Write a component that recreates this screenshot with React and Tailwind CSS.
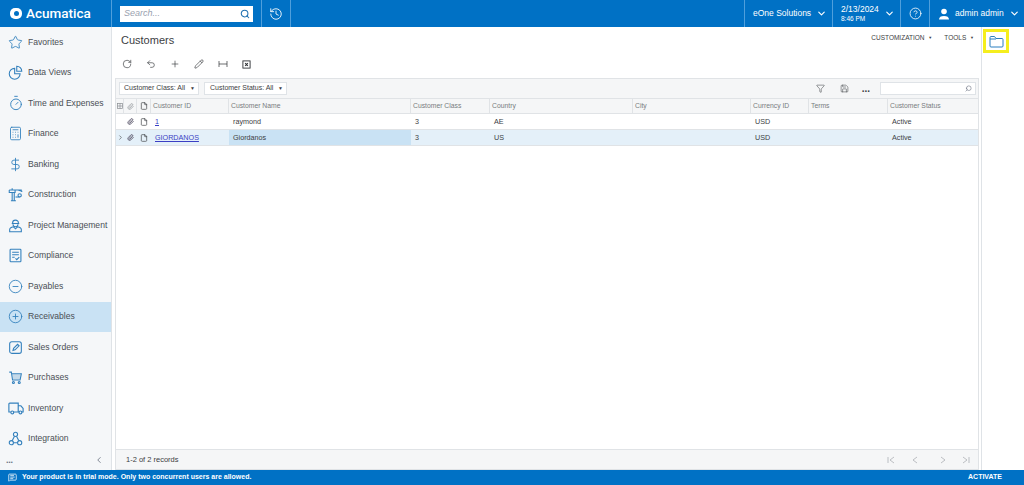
import React from "react";
import {
  Star, Timer, Calculator, DollarSign, CirclePlus, CircleMinus, ChevronDown,
  ChevronLeft, ChevronRight, CircleHelp, RotateCw, Undo2, Plus, Pencil, Filter, Save, Search, Paperclip, File, MessageSquareText, History,
} from "lucide-react";

const font = "font-['Liberation_Sans',Arial,sans-serif]";

const Svg = ({ children, w = 15, h = 15 }) => (
  <svg width={w} height={h} viewBox="0 0 18 18" fill="none" stroke="currentColor" strokeWidth="1.3" className="shrink-0">
    {children}
  </svg>
);

const DataViews = () => (
  <Svg>
    <path d="M8 4a6.5 6.5 0 1 0 6.5 6.5H8z" />
    <path d="M10.5 1.5a6 6 0 0 1 6 6h-6z" />
  </Svg>
);
const Crane = () => (
  <Svg>
    <path d="M1.5 3.5h15M5 1.5v2M1.5 3.5v3h7v-3M5 6.5V16M7.5 6.5V16M3.5 16.5h6M12 3.5l4.5 1.5v1" />
    <circle cx="14" cy="10" r="2" />
    <path d="M9 12h5" />
  </Svg>
);
const Worker = () => (
  <Svg>
    <path d="M5.5 6a3.5 3.5 0 0 1 7 0M4.5 6.5h9M6 7.5a3 3 0 0 0 6 0" />
    <path d="M2 16.5v-2.5c0-2 2-3 4.5-3.5L9 13l2.500-2.500c2.500.5 4.500 1.500 4.500 3.500v2.500z" />
  </Svg>
);
const Compliance = () => (
  <Svg>
    <rect x="2.500" y="1.500" width="13" height="15" rx="1" />
    <path d="M5 5h8M5 8h8M5 11h3M9 12.500l1.500 1.500 3-3" />
  </Svg>
);
const SalesOrders = () => (
  <Svg>
    <rect x="2" y="2" width="14" height="14" rx="2.500" />
    <path d="M6 12.500l.7-2.500 4.800-4.800 1.800 1.800-4.800 4.800z" />
  </Svg>
);
const Cart = () => (
  <Svg>
    <path d="M1.500 2.500H4l1.500 9.500h9l1.500-7.500H4.500" />
    <path d="M5 5h10.500l-1.200 6.500H6z" fill="currentColor" fillOpacity=".25" stroke="none" />
    <circle cx="6.500" cy="15" r="1.200" />
    <circle cx="13.500" cy="15" r="1.200" />
  </Svg>
);
const TruckIcon = () => (
  <Svg w={16} h={16}>
    <path d="M3 13.500H1v-9a1 1 0 0 1 1-1h9.500v10H6.500M11.500 6.500h3l2.500 3v4h-1.500M11.500 13.500h1" />
    <circle cx="4.800" cy="14" r="1.600" />
    <circle cx="14" cy="14" r="1.600" />
  </Svg>
);
const Integration = () => (
  <Svg>
    <circle cx="9" cy="4" r="2.500" />
    <circle cx="4" cy="14" r="2.500" />
    <circle cx="14" cy="14" r="2.500" />
    <path d="M7.800 6.200L5 11.800M10.200 6.200L13 11.800M6.500 14h5" />
  </Svg>
);

const wrap = (Icon, size = 15) => () => <Icon size={size} strokeWidth={1.4} className="shrink-0" />;

const menu = [
  ["Favorites", wrap(Star)],
  ["Data Views", DataViews],
  ["Time and Expenses", wrap(Timer, 16)],
  ["Finance", wrap(Calculator)],
  ["Banking", wrap(DollarSign)],
  ["Construction", Crane],
  ["Project Management", Worker],
  ["Compliance", Compliance],
  ["Payables", wrap(CircleMinus)],
  ["Receivables", wrap(CirclePlus)],
  ["Sales Orders", SalesOrders],
  ["Purchases", Cart],
  ["Inventory", TruckIcon],
  ["Integration", Integration],
];

const cols = "grid grid-cols-[8px_13px_14px_78px_182px_79px_143px_118px_58px_79px_1fr]";

const headers = ["Customer ID", "Customer Name", "Customer Class", "Country", "City", "Currency ID", "Terms", "Customer Status"];

const rows = [
  { id: "1", name: "raymond", cls: "3", country: "AE", cur: "USD", status: "Active" },
  { id: "GIORDANOS", name: "Giordanos", cls: "3", country: "US", cur: "USD", status: "Active", active: true },
];

function TopBar() {
  return (
    <header className="h-[27px] bg-[#0071c5] text-white flex items-stretch shrink-0">
      <div className="w-[112px] flex items-center pl-[10px] gap-[4px] border-r border-[#4f9fdc]">
        <span className="w-[12px] h-[11px] rounded-[5px] bg-white flex items-center justify-center">
          <span className="w-[5px] h-[5px] rounded-full bg-[#0071c5]" />
        </span>
        <span className="font-['Roboto',sans-serif] font-medium text-[13.5px] leading-none">Acumatica</span>
      </div>
      <div className="w-[150px] flex items-center pl-[8px] border-r border-[#4f9fdc]">
        <div className="w-[133px] h-[16px] bg-white flex items-center justify-between pl-[4px] pr-[3px]">
          <span className="text-[9px] italic text-gray-400">Search...</span>
          <Search size={10} className="text-[#1c6fb0]" strokeWidth={2.5} />
        </div>
      </div>
      <div className="w-[29px] flex items-center justify-center border-r border-[#4f9fdc]">
        <History size={14} strokeWidth={1.5} />
      </div>
      <div className="flex-1" />
      <div className="w-[88px] flex items-center pl-[8px] gap-[5px] border-l border-[#4f9fdc] text-[8.5px] whitespace-nowrap">
        eOne Solutions <ChevronDown size={11} strokeWidth={2.5} />
      </div>
      <div className="w-[68px] flex items-center pl-[8px] gap-[7px] border-l border-[#4f9fdc]">
        <div className="leading-none w-[36px]">
          <div className="text-[8.5px]">2/13/2024</div>
          <div className="text-[6.5px] mt-[3px]">8:46 PM</div>
        </div>
        <ChevronDown size={11} strokeWidth={2.5} />
      </div>
      <div className="w-[29px] flex items-center justify-center border-l border-[#4f9fdc]">
        <CircleHelp size={13} strokeWidth={1.5} />
      </div>
      <div className="w-[95px] flex items-center pl-[8px] border-l border-[#4f9fdc] text-[8.5px] whitespace-nowrap">
        <svg width="12" height="12" viewBox="0 0 12 12" fill="white" className="mr-[5px] shrink-0">
          <circle cx="6" cy="3.500" r="2.800" />
          <path d="M1 11.500c0-2.500 2-3.500 5-3.500s5 1 5 3.500z" />
        </svg>
        admin admin
        <ChevronDown size={11} strokeWidth={2.5} className="ml-[5px] shrink-0" />
      </div>
    </header>
  );
}

function Sidebar() {
  return (
    <aside className="w-[112px] shrink-0 bg-[#f5f7f9] border-r border-[#dfe3e7] flex flex-col">
      {menu.map(([label, Icon]) => (
        <div
          key={label}
          className={`h-[30.5px] shrink-0 flex items-center pl-[8px] text-[8.6px] whitespace-nowrap text-[#4a4f55] ${label === "Receivables" ? "bg-[#c9e2f4]" : ""}`}
        >
          <span className="w-[20px] text-[#3481bd] shrink-0 flex">
            <Icon />
          </span>
          {label}
        </div>
      ))}
      <div className="flex-1 flex items-center justify-between pl-[6px] pr-[7px] pb-[4px] text-gray-500">
        <span className="text-[9px] leading-none font-bold tracking-tight">...</span>
        <ChevronLeft size={10} />
      </div>
    </aside>
  );
}

function Toolbar() {
  const icons = [RotateCw, Undo2, Plus, Pencil];
  return (
    <div className="flex items-center gap-[14px] h-[14px] mt-[10px] pl-[1px] text-[#2f3235]">
      {icons.map((Icon, i) => (
        <Icon key={i} size={10} strokeWidth={1.5} />
      ))}
      <svg width="10" height="10" viewBox="0 0 10 10" fill="none" stroke="currentColor">
        <path d="M1 2v6M9 2v6M1 5h8" strokeWidth=".7" />
      </svg>
      <svg width="9" height="9" viewBox="0 0 10 10" fill="none" stroke="currentColor">
        <rect x="1" y="1" width="8" height="8" strokeWidth="1" />
        <path d="M3.500 3.500l3 3M6.500 3.500l-3 3" strokeWidth="1.200" />
      </svg>
    </div>
  );
}

function PagerIcon({ kind }) {
  const d = {
    first: "M2 2v6M8 2L4 5l4 3",
    prev: "M7 2L3 5l4 3",
    next: "M3 2l4 3-4 3",
    last: "M8 2v6M2 2l4 3-4 3",
  }[kind];
  return (
    <svg width="10" height="10" viewBox="0 0 10 10" fill="none" stroke="currentColor" strokeWidth=".9">
      <path d={d} />
    </svg>
  );
}

function Grid() {
  return (
    <div className="mt-[7px] ml-[-6px] flex-1 flex flex-col border border-[#e0e3e6] min-h-0">
      <div className="h-[20px] shrink-0 bg-[#f5f6f7] flex items-center pl-[3px] gap-[5px] text-[7px] text-[#3c4043] border-b border-[#e0e3e6] whitespace-nowrap">
        <div className="h-[13px] w-[80px] bg-white border border-[#dfe3e7] flex items-center justify-between pl-[4px] pr-[3px]">
          Customer Class: All <span className="text-[5px]">▼</span>
        </div>
        <div className="h-[13px] w-[83px] bg-white border border-[#dfe3e7] flex items-center justify-between pl-[5px] pr-[3px]">
          Customer Status: All <span className="text-[5px]">▼</span>
        </div>
        <div className="flex-1" />
        <Filter size={9} strokeWidth={1.4} />
        <Save size={9} strokeWidth={1.4} className="ml-[10px]" />
        <span className="ml-[8px] text-[10px] font-bold leading-none">...</span>
        <div className="ml-[5px] mr-[2px] w-[96px] h-[13px] bg-white border border-[#dfe3e7] flex items-center justify-end pr-[3px]">
          <Search size={7} className="scale-x-[-1] text-gray-500" />
        </div>
      </div>

      <div className={`${cols} h-[15px] shrink-0 bg-[#f5f6f7] border-b border-[#e0e3e6] text-[6.8px] text-[#787c80]`}>
        <div className="flex items-center justify-center border-r border-[#e0e3e6]">
          <svg width="6" height="6" viewBox="0 0 6 6" fill="none" stroke="#8a8e92" strokeWidth=".7">
            <rect x=".4" y=".4" width="5.200" height="5.200" />
            <path d="M.4 3h5.200M3 .4v5.200" />
          </svg>
        </div>
        <div className="flex items-center justify-center border-r border-[#e0e3e6] text-[#9a9ea2]">
          <Paperclip size={7} strokeWidth={2.5} />
        </div>
        <div className="flex items-center justify-center border-r border-[#e0e3e6] text-[#3c4043]">
          <File size={8} />
        </div>
        {headers.map((h) => (
          <div key={h} className="flex items-center pl-[2px] border-r border-[#e0e3e6] whitespace-nowrap overflow-hidden last:border-r-0">
            {h}
          </div>
        ))}
      </div>

      {rows.map((r) => (
        <div key={r.id} className={`${cols} h-[16px] shrink-0 border-b border-[#e0e3e6] text-[7.2px] text-[#3c4043] ${r.active ? "bg-[#e4f0f9]" : ""}`}>
          <div className="flex items-center justify-center">
            {r.active && <ChevronRight size={7} />}
          </div>
          <div className="flex items-center justify-center text-[#5e5a6e]">
            <Paperclip size={7} strokeWidth={3} />
          </div>
          <div className="flex items-center justify-center">
            <File size={8} />
          </div>
          <div className="flex items-center pl-[4px] pt-px text-[#3b3fc4] underline">{r.id}</div>
          <div className={`flex items-center pl-[4px] pt-px ${r.active ? "bg-[#c9e2f4]" : ""}`}>{r.name}</div>
          <div className="flex items-center pl-[4px] pt-px">{r.cls}</div>
          <div className="flex items-center pl-[4px] pt-px">{r.country}</div>
          <div />
          <div className="flex items-center pl-[4px] pt-px">{r.cur}</div>
          <div />
          <div className="flex items-center pl-[4px] pt-px">{r.status}</div>
        </div>
      ))}

      <div className="flex-1" />

      <div className="h-[20px] shrink-0 bg-[#f5f6f7] border-t border-[#e0e3e6] flex items-center pl-[10px] pr-[7px] text-[7.5px] text-[#3c4043]">
        1-2 of 2 records
        <div className="flex-1" />
        <div className="flex items-center text-[#b4b8bc]">
          <PagerIcon kind="first" />
          <span className="ml-[14px]"><PagerIcon kind="prev" /></span>
          <span className="ml-[18px]"><PagerIcon kind="next" /></span>
          <span className="ml-[13px]"><PagerIcon kind="last" /></span>
        </div>
      </div>
    </div>
  );
}

export default function App() {
  return (
    <div className={`${font} w-[1024px] h-[485px] overflow-hidden flex flex-col bg-white`}>
      <TopBar />
      <div className="flex-1 flex min-h-0">
        <Sidebar />
        <main className="flex-1 flex flex-col pl-[9px] pr-[2px] pt-[6px]">
          <div className="flex items-center justify-between h-[14px] pr-[5px]">
            <h1 className="text-[11px] text-[#3c4043]">Customers</h1>
            <div className="flex gap-[12px] text-[6.5px] text-[#3c4043] mt-[-5px]">
              <span>CUSTOMIZATION <span className="text-[4px] align-middle ml-[2px]">▼</span></span>
              <span>TOOLS <span className="text-[4px] align-middle ml-[2px]">▼</span></span>
            </div>
          </div>
          <Toolbar />
          <Grid />
        </main>
        <aside className="w-[43px] shrink-0 border-l border-[#dfe3e7] pt-[2px] pl-[1px]">
          <div className="w-[26px] h-[24px] border-[3px] border-[#f5ee1e] flex items-center justify-center">
            <svg width="15" height="13" viewBox="0 0 15 13" fill="none" stroke="#2b7fc0" strokeWidth="1">
              <path d="M1 11V2.500a1 1 0 0 1 1-1h3.500l1.500 2h6a1 1 0 0 1 1 1V11a1 1 0 0 1-1 1H2a1 1 0 0 1-1-1zM1 4h6" />
            </svg>
          </div>
        </aside>
      </div>
      <footer className="h-[15px] shrink-0 bg-[#0071c5] text-white flex items-center pl-[8px] pr-[22px] text-[7px] font-bold">
        <MessageSquareText size={9} className="mr-[5px]" />
        Your product is in trial mode. Only two concurrent users are allowed.
        <div className="flex-1" />
        ACTIVATE
      </footer>
    </div>
  );
}
